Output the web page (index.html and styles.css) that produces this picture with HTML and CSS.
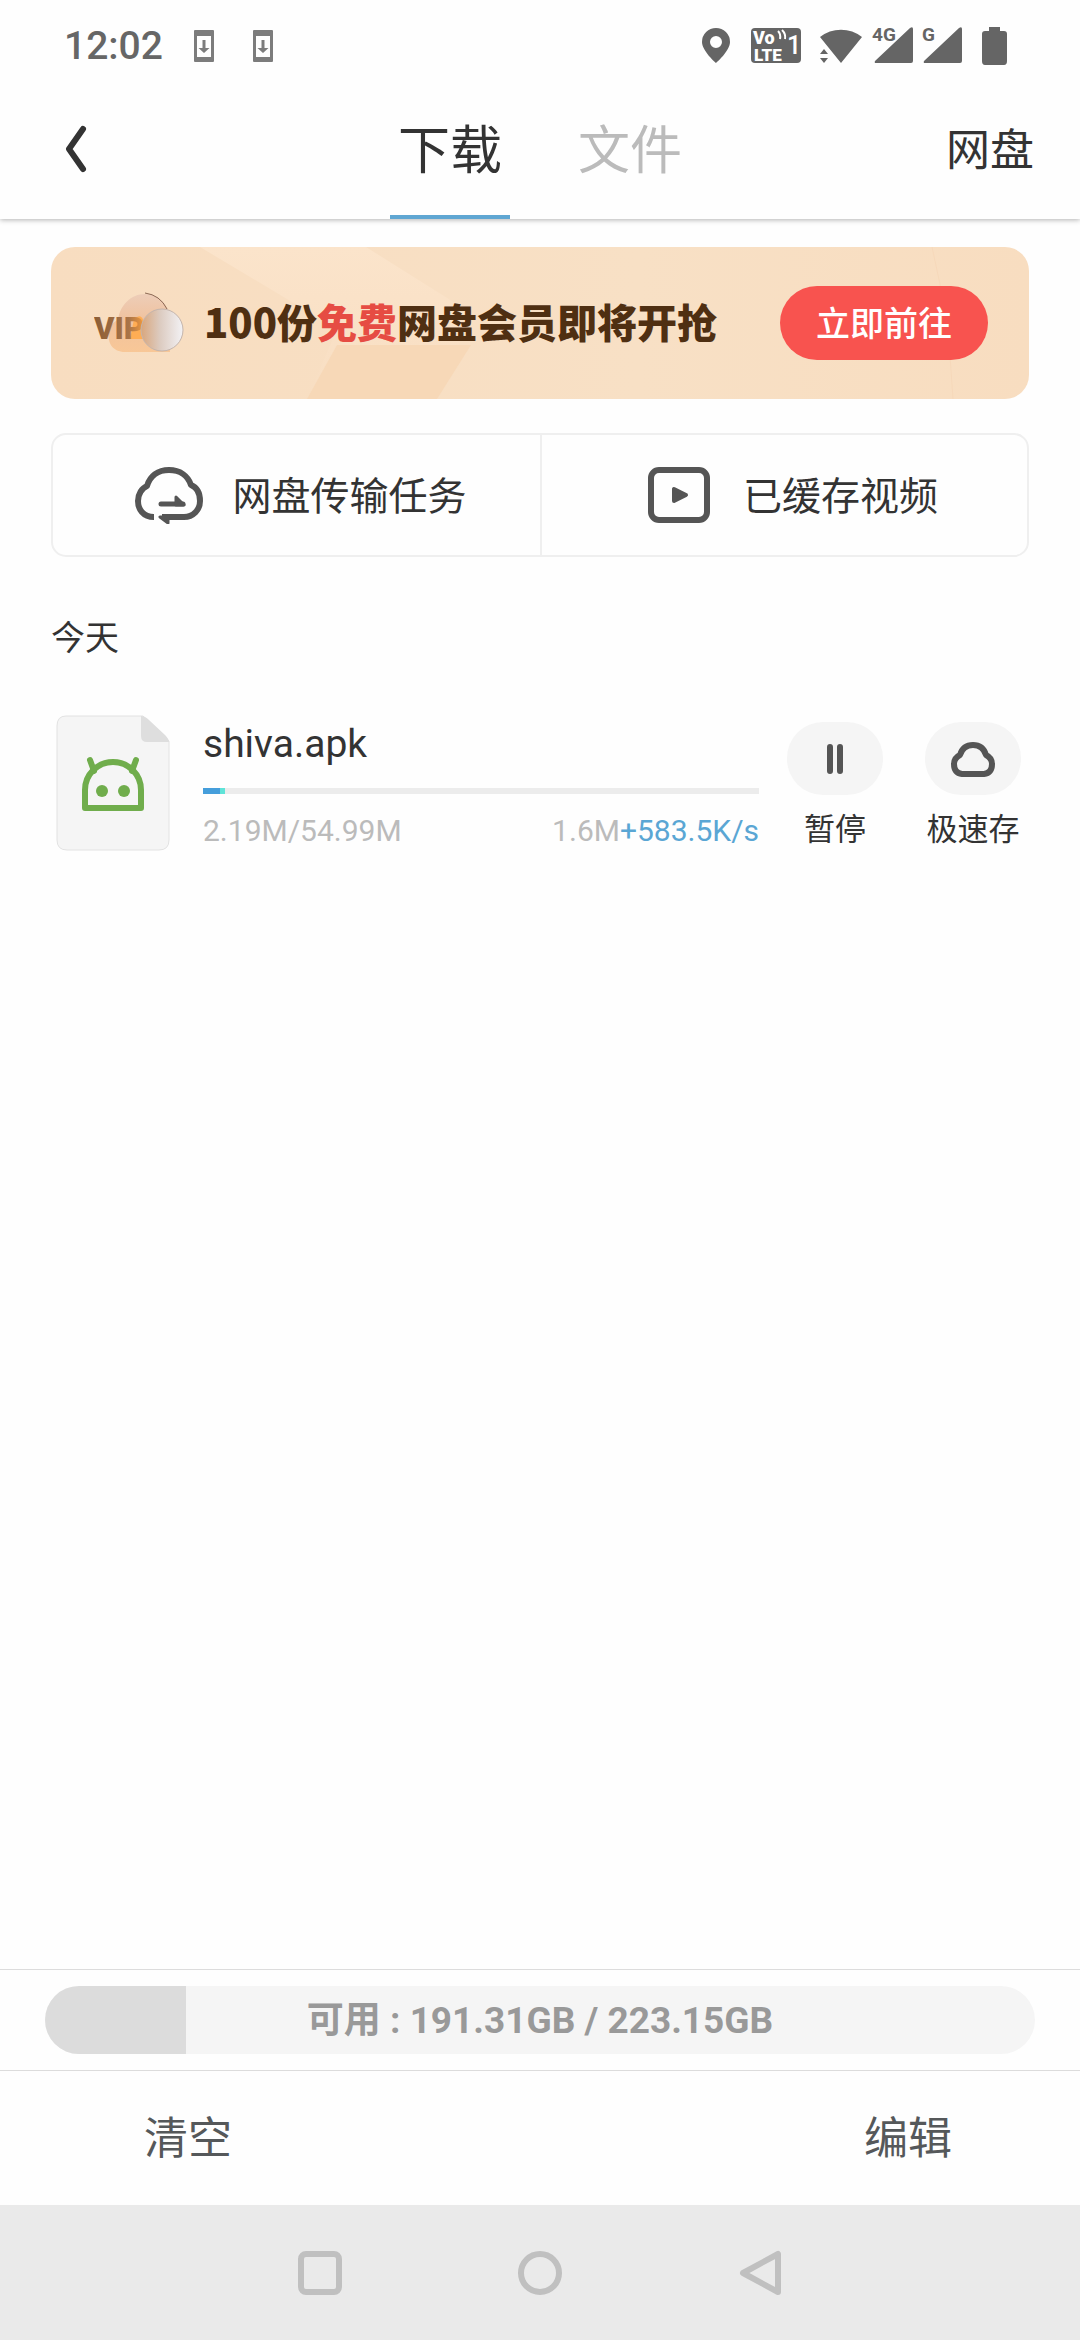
FILE: index.html
```html
<!DOCTYPE html>
<html lang="zh-CN">
<head>
<meta charset="utf-8">
<meta name="viewport" content="width=device-width, initial-scale=1">
<title>下载</title>
<link rel="stylesheet" href="styles.css">
</head>
<body>
<div class="statusbar">
  <span class="clock">12:02</span>
  <svg class="note" width="22" height="34" viewBox="0 0 22 34"><path fill="#7c7c7c" fill-rule="evenodd" d="M2 1h18q1 0 1 1v30q0 1-1 1H2q-1 0-1-1V2q0-1 1-1zM4 7v21h14V7z"/><path fill="#7c7c7c" d="M9.500 11h3v8h4L11 24l-5.500-5h4z"/></svg>
  <svg class="note note-second" width="22" height="34" viewBox="0 0 22 34"><path fill="#7c7c7c" fill-rule="evenodd" d="M2 1h18q1 0 1 1v30q0 1-1 1H2q-1 0-1-1V2q0-1 1-1zM4 7v21h14V7z"/><path fill="#7c7c7c" d="M9.500 11h3v8h4L11 24l-5.500-5h4z"/></svg>
  <svg class="system" width="306" height="54" viewBox="0 -8 306 54" fill="#656565">
    <path fill-rule="evenodd" d="M14 1a14 14 0 0 1 14 14c0 9-14 21-14 21S0 24 0 15A14 14 0 0 1 14 1zm0 8a6 6 0 1 0 0 12a6 6 0 1 0 0-12z"/>
    <rect x="49" y="1" width="50" height="35" rx="4"/>
    <g fill="#fff" font-family="Roboto" font-weight="900">
      <text x="51" y="17" font-size="18">Vo</text>
      <text x="52" y="34" font-size="17">LTE</text>
      <text x="85" y="27" font-size="25" font-weight="500">1</text>
    </g>
    <path d="M76 4q3 3 2 8M80 3q4 4 3 9" fill="none" stroke="#fff" stroke-width="2"/>
    <path d="M118 10a34 34 0 0 1 42 0L139 36zM122 22l4 5h-8zM122 36l4-5h-8z"/>
    <path d="M211 2v32q0 2-2 2h-35q-2 0-1-2L208 1q3-2 3 1zM260 2v32q0 2-2 2h-35q-2 0-1-2L257 1q3-2 3 1z"/>
    <g font-family="Roboto" font-weight="700" font-size="19"><text x="170" y="14">4G</text><text x="220" y="14">G</text></g>
    <path d="M287 0h11v4h4q3 0 3 3v27q0 4-3 4h-19q-3 0-3-4V7q0-3 3-3h4z"/>
  </svg>
</div>

<header class="topbar">
  <button class="back" aria-label="返回"><svg width="24" height="48" viewBox="0 0 24 48"><path d="M19 4L5 24l14 20" fill="none" stroke="#333" stroke-width="6" stroke-linecap="round" stroke-linejoin="round"/></svg></button>
  <nav class="tabs">
    <a class="tab tab-active" href="#download">下载</a>
    <a class="tab" href="#files">文件</a>
  </nav>
  <a class="pan-link" href="#pan">网盘</a>
</header>

<main class="content">
  <section class="banner">
    <svg class="banner-art" viewBox="0 0 978 152" preserveAspectRatio="none" aria-hidden="true">
      <defs><linearGradient id="bg" x1="0" x2="1"><stop offset="0" stop-color="#f8ddc0"/><stop offset=".6" stop-color="#f8e0c5"/><stop offset="1" stop-color="#f8ddc0"/></linearGradient>
      <linearGradient id="ray" x1="0" x2="0" y1="0" y2="1"><stop offset="0" stop-color="#fbe4cb"/><stop offset="1" stop-color="#f8dec2"/></linearGradient></defs>
      <path fill="url(#bg)" d="M0 0h978v152H0z"/>
      <path fill="url(#ray)" d="M149 0h166l105 66-33 86H256l30-70z"/>
      <path fill="#f7d8b7" d="M286 98h134l-34 54H256z"/>
      <path fill="none" stroke="#f6d8ba" stroke-width="1" d="M881 0q17 70 21 152"/>
    </svg>
    <svg class="vip" width="90" height="64" viewBox="0 0 90 64">
      <defs>
        <linearGradient id="cloud" x1="0" x2="0" y1="0" y2="1"><stop offset="0" stop-color="#edcdb8"/><stop offset=".45" stop-color="#f0c29e"/><stop offset="1" stop-color="#f8c797"/></linearGradient>
        <linearGradient id="lens" x1="0" x2="1"><stop offset="0" stop-color="#d9a67c"/><stop offset=".45" stop-color="#dccbc0"/><stop offset="1" stop-color="#f3f2f5"/></linearGradient>
        <linearGradient id="gold" x1="0" x2="1"><stop offset="0" stop-color="#8b5d35"/><stop offset=".7" stop-color="#a97448"/><stop offset="1" stop-color="#f39a3d"/></linearGradient>
      </defs>
      <path fill="url(#cloud)" d="M24 29C26 14 37 3 51 3c13 0 22 9 25 22v36H31C19 61 13 52 15 41c1-6 4-10 9-12z"/>
      <path d="M51 2q15 2 22 16" stroke="#8c6954" stroke-width="1" fill="none"/>
      <path d="M40 28q8-7 10 4v16H36z" fill="#ffad54"/>
      <text x="0" y="48" font-family="Roboto" font-size="31" font-weight="900" fill="url(#gold)">VIP</text>
      <circle cx="68" cy="39" r="21" fill="url(#lens)" stroke="#c4b5ad" stroke-width="1"/>
    </svg>
    <p class="banner-text">100份<em>免费</em>网盘会员即将开抢</p>
    <button class="banner-go">立即前往</button>
  </section>

  <div class="shortcuts">
    <button class="shortcut">
      <svg width="70" height="58" viewBox="0 0 70 58" fill="none" stroke="#555" stroke-width="6" stroke-linecap="round" stroke-linejoin="round"><path stroke-linecap="butt" d="M20 51C9 51 4 43 4 35c0-7 4-13 9-15C16 10 24 4 35 4s19 6 22 15c5 2 9 7 9 16 0 9-7 16-16 16H28"/><path stroke-width="5" d="M27 38h22"/><path fill="#555" stroke-width="3" d="M42 31l8 8h-8zM26 51h8v6z"/></svg>
      <span>网盘传输任务</span>
    </button>
    <button class="shortcut">
      <svg width="64" height="58" viewBox="0 0 64 58"><rect x="4" y="4" width="56" height="50" rx="8" fill="none" stroke="#555" stroke-width="6"/><path fill="#555" stroke="#555" stroke-width="4" stroke-linejoin="round" d="M27 23v12l12-6z"/></svg>
      <span>已缓存视频</span>
    </button>
  </div>

  <h2 class="day">今天</h2>

  <article class="task">
    <svg class="file-icon" width="114" height="136" viewBox="0 0 114 136">
      <path fill="#f5f5f5" stroke="#e2e2e2" stroke-width="1" d="M10 1h77l26 25v99q0 10-10 10H11q-10 0-10-10V11Q1 1 10 1z"/>
      <path fill="#dedede" d="M85 1q4 0 8 4l16 15q4 4 4 7H91q-6 0-6-6z"/>
      <g fill="none" stroke="#70ad4c" stroke-width="6" stroke-linecap="round" stroke-linejoin="round"><path d="M29 93V75a28 28 0 0 1 56 0v18z"/><path d="M34 45l4 11M80 45l-4 11"/></g>
      <circle cx="46" cy="76" r="6" fill="#70ad4c"/><circle cx="68" cy="76" r="6" fill="#70ad4c"/>
    </svg>
    <div class="task-info">
      <h3 class="task-name">shiva.apk</h3>
      <div class="task-progress" role="progressbar" aria-label="下载进度" aria-valuemin="0" aria-valuemax="100" aria-valuenow="4">
        <span class="done" style="width:3%"></span><span class="boost" style="width:1%"></span>
      </div>
      <div class="task-meta"><span>2.19M/54.99M</span><span>1.6M<b>+583.5K/s</b></span></div>
    </div>
    <button class="action">
      <span class="pill"><svg width="18" height="30" viewBox="0 0 18 30"><path d="M4 3v24M14 3v24" stroke="#555" stroke-width="6" stroke-linecap="round"/></svg></span>
      <span>暂停</span>
    </button>
    <button class="action">
      <span class="pill"><svg width="46" height="36" viewBox="0 0 46 36"><path d="M12 33q-8-1-8-10 0-6 6-9 3-10 13-10t13 10q6 3 6 9 0 9-8 10z" fill="none" stroke="#555" stroke-width="6" stroke-linejoin="round"/></svg></span>
      <span>极速存</span>
    </button>
  </article>
</main>

<section class="storage">
  <div class="storage-bar">
    <span class="storage-used" style="width:14.2%"></span>
    <span class="storage-label">可用 : 191.31GB / 223.15GB</span>
  </div>
</section>
<footer class="tools">
  <button class="tool">清空</button>
  <button class="tool">编辑</button>
</footer>
<nav class="sysnav">
  <button aria-label="最近任务"><svg width="46" height="46" viewBox="0 0 46 46"><rect x="4" y="4" width="38" height="38" rx="5"/></svg></button>
  <button aria-label="主屏幕"><svg width="46" height="46" viewBox="0 0 46 46"><circle cx="23" cy="23" r="19"/></svg></button>
  <button aria-label="返回"><svg width="46" height="46" viewBox="0 0 46 46"><path d="M41 4v38L6 23z"/></svg></button>
</nav>
</body>
</html>
```
FILE: styles.css
```css
* { box-sizing: border-box; }
body {
  margin: 0;
  min-height: 100vh;
  display: flex;
  flex-direction: column;
  background: #fefefe;
  color: #333;
  font-family: Roboto, "Noto Sans CJK SC", sans-serif;
}
button {
  padding: 0;
  border: 0;
  background: none;
  color: inherit;
  font: inherit;
}
a { color: inherit; text-decoration: none; }
svg { display: block; flex: none; }

.statusbar {
  display: flex;
  align-items: center;
  height: 92px;
  padding: 0 72px 0 64px;
}
.clock {
  color: #666;
  font-size: 39px;
  font-weight: 500;
  line-height: 48px;
}
.note { margin-left: 30px; }
.note-second { margin-left: 37px; }
.system { margin-left: auto; }

.topbar {
  display: grid;
  grid-template-columns: 1fr auto 1fr;
  height: 127px;
  box-shadow: 0 1px 5px rgba(0, 0, 0, .3);
  clip-path: inset(0 0 -8px 0);
}
.back {
  display: flex;
  align-items: center;
  padding: 0 0 13px 64px;
}
.tabs { display: flex; }
.tab {
  display: flex;
  justify-content: center;
  align-items: flex-start;
  width: 120px;
  margin: 0 30px;
  padding-top: 22px;
  border-bottom: 4px solid transparent;
  color: #bbb;
  font-size: 52px;
  line-height: 76px;
}
.tab-active {
  border-color: #5fa6d2;
  color: #333;
}
.pan-link {
  justify-self: end;
  padding: 26px 46px 0 0;
  font-size: 44px;
  line-height: 66px;
}

.content {
  flex: 1;
  padding: 28px 51px 0;
}
.banner {
  position: relative;
  display: flex;
  align-items: center;
  height: 152px;
  padding: 0 41px 0 43px;
  border-radius: 24px;
  overflow: hidden;
}
.banner-art {
  position: absolute;
  inset: 0;
  width: 100%;
  height: 100%;
}
.vip, .banner-text, .banner-go { position: relative; }
.banner-text {
  flex: 1;
  margin: 0 0 0 20px;
  padding-bottom: 4px;
  color: #4f2f12;
  font-family: "Noto Sans CJK SC", sans-serif;
  font-size: 40px;
  font-weight: 900;
  line-height: 60px;
}
.banner-text em { color: #e64c43; font-style: normal; }
.banner-go {
  width: 208px;
  height: 74px;
  padding-bottom: 4px;
  border-radius: 37px;
  background: #f8534f;
  color: #fff;
  font-size: 34px;
  font-weight: 500;
}

.shortcuts {
  display: grid;
  grid-template-columns: 1fr 1fr;
  height: 124px;
  margin-top: 34px;
  border: 2px solid #efefef;
  border-radius: 15px;
}
.shortcut {
  display: flex;
  align-items: center;
  justify-content: center;
  gap: 28px;
  padding-left: 8px;
  font-size: 39px;
  line-height: 58px;
}
.shortcut span { padding-top: 4px; }
.shortcut + .shortcut {
  gap: 32px;
  padding-left: 16px;
  border-left: 2px solid #efefef;
}

.day {
  margin: 56px 0 0;
  font-size: 34px;
  font-weight: 400;
  line-height: 50px;
}

.task {
  display: flex;
  align-items: flex-start;
  margin-top: 52px;
  padding-left: 5px;
}
.task-info {
  flex: 1;
  margin-left: 33px;
  margin-right: 28px;
}
.task-name {
  margin: 6px 0 0;
  font-size: 39px;
  font-weight: 400;
  line-height: 46px;
}
.task-progress {
  display: flex;
  height: 6px;
  margin-top: 21px;
  background: #ececec;
}
.done { background: #459edb; }
.boost { background: #5fe3d8; }
.task-meta {
  display: flex;
  justify-content: space-between;
  margin-top: 19px;
  color: #bbb;
  font-size: 30px;
  line-height: 36px;
}
.task-meta b { color: #5aa6d4; font-weight: 400; }
.action {
  display: flex;
  flex-direction: column;
  align-items: center;
  gap: 12px;
  width: 96px;
  margin: 7px 8px 0 0;
  font-size: 31px;
  line-height: 46px;
  white-space: nowrap;
}
.action + .action { margin-left: 34px; }
.pill {
  display: flex;
  align-items: center;
  justify-content: center;
  width: 96px;
  height: 73px;
  border-radius: 36px;
  background: #f5f5f5;
}

.storage {
  padding: 16px 45px;
  border: 1px solid #dcdcdc;
  border-width: 1px 0;
}
.storage-bar {
  position: relative;
  height: 68px;
  border-radius: 34px;
  background: #f5f5f5;
  overflow: hidden;
  text-align: center;
}
.storage-used {
  position: absolute;
  inset: 0 auto 0 0;
  background: #dcdcdc;
}
.storage-label {
  position: relative;
  color: #999;
  font-size: 37px;
  font-weight: 700;
  line-height: 70px;
}
.tools {
  display: flex;
  justify-content: space-between;
  height: 134px;
  padding: 0 128px 6px 144px;
  color: #55585a;
  font-size: 44px;
}
.sysnav {
  display: flex;
  justify-content: center;
  gap: 174px;
  height: 135px;
  background: #eaeaea;
}
.sysnav svg {
  fill: none;
  stroke: #c0c0c0;
  stroke-width: 6;
  stroke-linejoin: round;
}
```
